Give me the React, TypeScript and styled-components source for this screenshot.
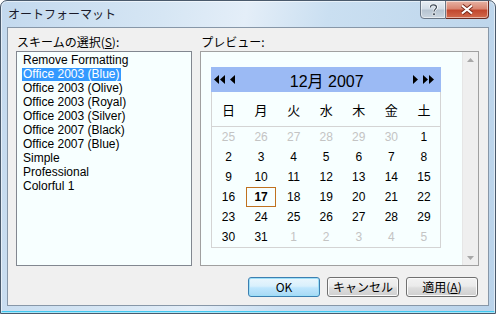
import styled, { createGlobalStyle } from 'styled-components';

const GlobalStyle = createGlobalStyle`
  html, body {
    margin: 0;
    padding: 0;
    background: #ffffff;
  }
`;

const UI_FONT = `"Liberation Sans", "Noto Sans CJK JP", sans-serif`;
const JP_FONT = `"Noto Sans CJK JP", "Liberation Sans", sans-serif`;

const Window = styled.div`
  width: 496px;
  height: 314px;
  box-sizing: border-box;
  display: flex;
  flex-direction: column;
  border: 1px solid #4a5a6c;
  border-radius: 7px 7px 0 0;
  background: linear-gradient(
    100deg,
    #c3d9ee 0%,
    #d6e6f4 30%,
    #e4eef8 45%,
    #cadff1 60%,
    #bad3ea 100%
  );
  box-shadow: inset 0 0 0 1px rgba(255, 255, 255, 0.55), inset 0 -2px 0 #41c8f0;
  overflow: hidden;
`;

const TitleBar = styled.div`
  height: 26px;
  display: flex;
  justify-content: space-between;
  align-items: flex-start;
  padding: 0 6px 0 7px;
`;

const Title = styled.div`
  font-family: ${JP_FONT};
  font-size: 12px;
  line-height: 26px;
  color: #1a1a2a;
`;

const Caption = styled.div`
  display: flex;
  margin-top: -1px;
`;

const CaptionButton = styled.div<{ $close?: boolean }>`
  width: ${(p) => (p.$close ? 43 : 26)}px;
  height: 19px;
  box-sizing: border-box;
  display: flex;
  align-items: center;
  justify-content: center;
  border: 1px solid ${(p) => (p.$close ? '#6b2a20' : '#6a7786')};
  border-left-width: ${(p) => (p.$close ? 0 : 1)}px;
  border-radius: ${(p) => (p.$close ? '0 0 4px 0' : '0 0 0 4px')};
  background: ${(p) =>
    p.$close
      ? 'linear-gradient(#e7b3a4 0%, #d98672 45%, #c2482f 55%, #d26a4d 100%)'
      : 'linear-gradient(#e8eef4 0%, #d3dde7 45%, #b7c4d1 55%, #cbd6e0 100%)'};
  box-shadow: inset 0 0 0 1px rgba(255, 255, 255, 0.5);
`;

const Client = styled.div`
  flex: 1;
  margin: 0 6px 7px 6px;
  border: 1px solid #8797a8;
  background: #f0f0f0;
  display: flex;
  flex-direction: column;
`;

const Panels = styled.div`
  display: flex;
  gap: 8px;
  padding: 6px 9px 0 8px;
`;

const Column = styled.div<{ $width: number }>`
  width: ${(p) => p.$width}px;
  display: flex;
  flex-direction: column;
`;

const Label = styled.div`
  font-family: ${JP_FONT};
  font-size: 12px;
  line-height: 15px;
  height: 15px;
  margin-bottom: 2px;
  color: #000;
  padding-left: 1px;
`;

const ListBox = styled.div`
  height: 215px;
  box-sizing: border-box;
  border: 1px solid #828790;
  background: #f7ffff;
  padding: 1px 0 0 5px;
`;

const ListItem = styled.div`
  height: 14px;
  display: flex;
  align-items: center;
`;

const ItemText = styled.span<{ $selected?: boolean }>`
  font-family: ${UI_FONT};
  font-size: 12px;
  line-height: 13px;
  padding: 0 1px;
  color: ${(p) => (p.$selected ? '#ffffff' : '#000000')};
  background: ${(p) => (p.$selected ? '#3399ff' : 'transparent')};
`;

const PreviewBox = styled.div`
  height: 215px;
  box-sizing: border-box;
  border: 1px solid #a0a0a0;
  background: #f7ffff;
  display: flex;
`;

const PreviewArea = styled.div`
  flex: 1;
  padding: 15px 0 0 10px;
`;

const ScrollBar = styled.div`
  width: 15px;
  background: #efefef;
  border-left: 1px solid #e6e6e6;
  display: flex;
  flex-direction: column;
  justify-content: space-between;
  align-items: center;
  padding: 6px 0 5px;
`;

const Calendar = styled.div`
  width: 230px;
  box-sizing: border-box;
  border: 1px solid #d4d4d4;
  border-top: 0;
  background: #f7ffff;
`;

const CalHeader = styled.div`
  height: 25px;
  margin: 0 -1px;
  background: #9bbaf4;
  display: flex;
  align-items: center;
  justify-content: space-between;
  padding: 0 2px 0 3px;
`;

const NavGroup = styled.div`
  display: flex;
  align-items: center;
  gap: 5px;
  width: 26px;
`;

const MonthTitle = styled.div`
  font-family: ${UI_FONT};
  font-size: 16px;
  color: #000;
  padding-top: 1px;
`;

const Grid = styled.div`
  display: grid;
  grid-template-columns: repeat(7, 1fr);
`;

const DayName = styled.div`
  height: 34px;
  display: flex;
  align-items: center;
  justify-content: center;
  font-family: ${JP_FONT};
  font-size: 13px;
  color: #000;
  border-bottom: 1px solid #d4d4d4;
`;

const DayCell = styled.div<{ $muted?: boolean; $today?: boolean }>`
  height: 20px;
  display: flex;
  align-items: center;
  justify-content: center;
  font-family: ${UI_FONT};
  font-size: 12px;
  font-weight: ${(p) => (p.$today ? 700 : 400)};
  color: ${(p) => (p.$muted ? '#c4c4c4' : '#000')};
  box-sizing: border-box;
  margin: 0 1px;
  border: 1px solid ${(p) => (p.$today ? '#c0711f' : 'transparent')};
`;

const ButtonRow = styled.div`
  display: flex;
  justify-content: flex-end;
  gap: 7px;
  padding: 11px 10px 0 0;
`;

const Button = styled.button<{ $default?: boolean }>`
  width: 72px;
  height: 20px;
  padding: 0;
  box-sizing: border-box;
  border: 1px solid ${(p) => (p.$default ? '#3c7fb1' : '#707070')};
  border-radius: 3px;
  background: ${(p) =>
    p.$default
      ? 'linear-gradient(#eaf6fd 0%, #d9f0fc 45%, #bee6fd 55%, #a7d9f5 100%)'
      : 'linear-gradient(#f2f2f2 0%, #ebebeb 45%, #dddddd 55%, #cfcfcf 100%)'};
  box-shadow: inset 0 0 0 1px ${(p) => (p.$default ? '#9ddff8' : '#fbfbfb')};
  font-family: ${JP_FONT};
  font-size: 12px;
  color: #000;
  line-height: 18px;
`;

const leftTri = 'M5 0 L5 9 L0 4.5 Z';
const rightTri = 'M0 0 L0 9 L5 4.5 Z';

const Arrows = ({ dir, count }: { dir: 'left' | 'right'; count: number }) => (
  <svg width={count === 2 ? 11 : 5} height={9} viewBox={`0 0 ${count === 2 ? 11 : 5} 9`}>
    <path d={dir === 'left' ? leftTri : rightTri} fill="#000" />
    {count === 2 && (
      <path
        d={dir === 'left' ? leftTri : rightTri}
        transform="translate(6 0)"
        fill="#000"
      />
    )}
  </svg>
);

const schemes = [
  'Remove Formatting',
  'Office 2003 (Blue)',
  'Office 2003 (Olive)',
  'Office 2003 (Royal)',
  'Office 2003 (Silver)',
  'Office 2007 (Black)',
  'Office 2007 (Blue)',
  'Simple',
  'Professional',
  'Colorful 1',
];

const dayNames = ['日', '月', '火', '水', '木', '金', '土'];

const days: { n: number; muted?: boolean }[] = [
  ...[25, 26, 27, 28, 29, 30].map((n) => ({ n, muted: true })),
  ...Array.from({ length: 31 }, (_, i) => ({ n: i + 1 })),
  ...[1, 2, 3, 4, 5].map((n) => ({ n, muted: true })),
];

const App = () => {
  return (
    <>
      <GlobalStyle />
      <Window>
        <TitleBar>
          <Title>オートフォーマット</Title>
          <Caption>
            <CaptionButton>
              <svg width="9" height="12" viewBox="0 0 9 12">
                <path
                  d="M1.5 3.5 C1.5 1 3 0.8 4.5 0.8 C6 0.8 7.5 1.6 7.5 3.3 C7.5 5 5 5.3 5 7.5"
                  fill="none"
                  stroke="#fff"
                  strokeWidth="2.6"
                />
                <path
                  d="M1.5 3.5 C1.5 1 3 0.8 4.5 0.8 C6 0.8 7.5 1.6 7.5 3.3 C7.5 5 5 5.3 5 7.5"
                  fill="none"
                  stroke="#3c4856"
                  strokeWidth="1.2"
                />
                <rect x="3.8" y="9" width="2.4" height="2.4" fill="#3c4856" stroke="#fff" strokeWidth="0.6" />
              </svg>
            </CaptionButton>
            <CaptionButton $close>
              <svg width="14" height="11" viewBox="0 0 14 11">
                <path d="M2 1.5 L12 9.5 M12 1.5 L2 9.5" stroke="#7a2a1c" strokeWidth="4" />
                <path d="M2 1.5 L12 9.5 M12 1.5 L2 9.5" stroke="#ffffff" strokeWidth="2.2" />
              </svg>
            </CaptionButton>
          </Caption>
        </TitleBar>
        <Client>
          <Panels>
            <Column $width={177}>
              <Label>
                スキームの選択(<u>S</u>):
              </Label>
              <ListBox>
                {schemes.map((s, i) => (
                  <ListItem key={s}>
                    <ItemText $selected={i === 1}>{s}</ItemText>
                  </ListItem>
                ))}
              </ListBox>
            </Column>
            <Column $width={280}>
              <Label>プレビュー:</Label>
              <PreviewBox>
                <PreviewArea>
                  <Calendar>
                    <CalHeader>
                      <NavGroup>
                        <Arrows dir="left" count={2} />
                        <Arrows dir="left" count={1} />
                      </NavGroup>
                      <MonthTitle>12月 2007</MonthTitle>
                      <NavGroup>
                        <Arrows dir="right" count={1} />
                        <Arrows dir="right" count={2} />
                      </NavGroup>
                    </CalHeader>
                    <Grid>
                      {dayNames.map((d) => (
                        <DayName key={d}>{d}</DayName>
                      ))}
                      {days.map((d, i) => (
                        <DayCell key={i} $muted={d.muted} $today={!d.muted && d.n === 17}>
                          {d.n}
                        </DayCell>
                      ))}
                    </Grid>
                  </Calendar>
                </PreviewArea>
                <ScrollBar>
                  <svg width="7" height="4" viewBox="0 0 7 4">
                    <path d="M0 4 L3.5 0 L7 4 Z" fill="#a8a8a8" />
                  </svg>
                  <svg width="7" height="4" viewBox="0 0 7 4">
                    <path d="M0 0 L3.5 4 L7 0 Z" fill="#a8a8a8" />
                  </svg>
                </ScrollBar>
              </PreviewBox>
            </Column>
          </Panels>
          <ButtonRow>
            <Button $default>OK</Button>
            <Button>キャンセル</Button>
            <Button>
              適用(<u>A</u>)
            </Button>
          </ButtonRow>
        </Client>
      </Window>
    </>
  );
};

export default App;
